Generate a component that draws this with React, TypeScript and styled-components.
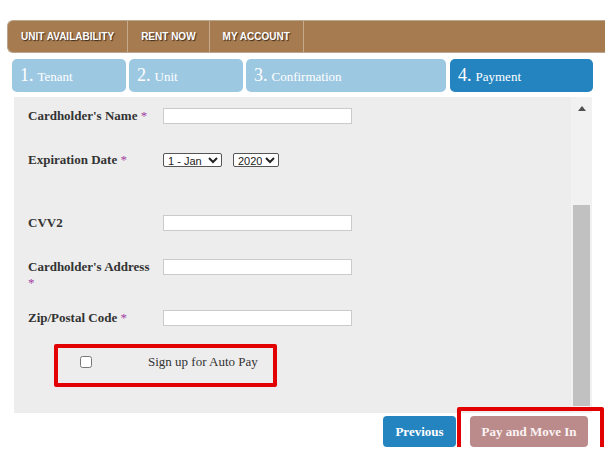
import React from 'react';
import styled, { createGlobalStyle } from 'styled-components';

const GlobalStyle = createGlobalStyle`
  body {
    margin: 0;
    background: #fff;
    font-family: "Liberation Serif", "Times New Roman", serif;
  }
`;

const navItems = ['UNIT AVAILABILITY', 'RENT NOW', 'MY ACCOUNT'];

const steps = [
  { num: '1.', label: 'Tenant', width: 114 },
  { num: '2.', label: 'Unit', width: 114 },
  { num: '3.', label: 'Confirmation', width: 200 },
  { num: '4.', label: 'Payment', width: 143, active: true },
];

const App = () => {
  return (
    <>
      <GlobalStyle />
      <Page>
        <Nav>
          {navItems.map((item) => (
            <NavItem key={item}>{item}</NavItem>
          ))}
        </Nav>

        <Steps>
          {steps.map((s) => (
            <Step key={s.num} $width={s.width} $active={!!s.active}>
              <StepNum>{s.num}</StepNum>
              <StepLabel>{s.label}</StepLabel>
            </Step>
          ))}
        </Steps>

        <Panel>
          <FormArea>
            <Row>
              <Label>Cardholder's Name <Req>*</Req></Label>
              <TextInput type="text" />
            </Row>
            <Row $gap={28}>
              <Label>Expiration Date <Req>*</Req></Label>
              <Selects>
                <Select $width={59} defaultValue="1">
                  <option value="1">1 - Jan</option>
                  <option value="2">2 - Feb</option>
                </Select>
                <Select $width={46} defaultValue="2020">
                  <option value="2020">2020</option>
                  <option value="2021">2021</option>
                </Select>
              </Selects>
            </Row>
            <Row $gap={47}>
              <Label>CVV2</Label>
              <TextInput type="text" />
            </Row>
            <Row $gap={28}>
              <Label>Cardholder's Address <Req>*</Req></Label>
              <TextInput type="text" />
            </Row>
            <Row $gap={19}>
              <Label>Zip/Postal Code <Req>*</Req></Label>
              <TextInput type="text" />
            </Row>
            <AutoPayBox>
              <Check type="checkbox" />
              <AutoPayText>Sign up for Auto Pay</AutoPayText>
            </AutoPayBox>
          </FormArea>
          <Scrollbar>
            <ArrowButton>
              <ArrowUp />
            </ArrowButton>
            <Track />
            <Thumb />
          </Scrollbar>
        </Panel>

        <Buttons>
          <PrevButton>Previous</PrevButton>
          <Highlight>
            <PayButton>Pay and Move In</PayButton>
            <RedFrame />
          </Highlight>
        </Buttons>
      </Page>
    </>
  );
};

export default App;

const Page = styled.div`
  width: 598px;
  padding: 20px 0 0 7px;
`;

const Nav = styled.nav`
  display: flex;
  height: 33px;
  box-sizing: border-box;
  background: #a67b50;
  border: 1px solid #b9a791;
  border-right: none;
  border-radius: 6px 0 0 6px;
`;

const NavItem = styled.div`
  display: flex;
  align-items: center;
  padding: 0 13px;
  border-right: 1px solid #c6aa8a;
  font-family: "Liberation Sans", Arial, sans-serif;
  font-weight: bold;
  font-size: 10px;
  color: #fff;
  text-shadow: 1px 1px 1px #3a2a1a;
`;

const Steps = styled.div`
  display: flex;
  gap: 3px;
  margin: 6px 0 0 5px;
`;

const Step = styled.div<{ $width: number; $active: boolean }>`
  width: ${(p) => p.$width}px;
  height: 33px;
  box-sizing: border-box;
  display: flex;
  align-items: baseline;
  padding: 6px 0 0 8px;
  margin-right: ${(p) => (p.$width === 200 ? 1 : 0)}px;
  border-radius: 5px;
  background: ${(p) => (p.$active ? '#2384c0' : '#9dc8e2')};
  color: #fff;
`;

const StepNum = styled.span`
  font-size: 18px;
  margin-right: 4px;
`;

const StepLabel = styled.span`
  font-size: 13px;
`;

const Panel = styled.div`
  display: flex;
  width: 578px;
  height: 316px;
  margin: 5px 0 0 7px;
  background: #ededed;
  overflow: hidden;
`;

const FormArea = styled.div`
  flex: 1;
  padding: 11px 0 0 14px;
`;

const Row = styled.div<{ $gap?: number }>`
  display: grid;
  grid-template-columns: 128px 189px;
  column-gap: 7px;
  align-items: start;
  margin-top: ${(p) => p.$gap || 0}px;
`;

const Label = styled.label`
  font-weight: bold;
  font-size: 13px;
  line-height: 16px;
  color: #333;
`;

const Req = styled.span`
  color: #a23da2;
  font-weight: normal;
`;

const TextInput = styled.input`
  width: 189px;
  height: 16px;
  box-sizing: border-box;
  margin: 0;
  padding: 0 3px;
  border: 1px solid #cbcbcb;
  background: #fff;
`;

const Selects = styled.div`
  display: flex;
  gap: 11px;
  padding-top: 1px;
`;

const Select = styled.select<{ $width: number }>`
  width: ${(p) => p.$width}px;
  height: 14px;
  box-sizing: border-box;
  margin: 0;
  padding: 0;
  font-family: "Liberation Sans", Arial, sans-serif;
  font-size: 11px;
  border: 1px solid #555;
  border-radius: 2px;
  background: #fff;
  color: #222;
`;

const AutoPayBox = styled.div`
  display: flex;
  align-items: flex-start;
  width: 223px;
  height: 43px;
  box-sizing: border-box;
  margin: 18px 0 0 26px;
  padding: 7px 0 0 22px;
  border: 4px solid #e30000;
  border-radius: 2px;
`;

const Check = styled.input`
  width: 12px;
  height: 12px;
  margin: 1px 0 0 0;
`;

const AutoPayText = styled.span`
  margin-left: 56px;
  font-size: 13px;
  line-height: 14px;
  color: #333;
`;

const Scrollbar = styled.div`
  display: flex;
  flex-direction: column;
  align-items: center;
  width: 21px;
  background: #f1f1f1;
`;

const ArrowButton = styled.div`
  display: flex;
  justify-content: center;
  height: 17px;
  width: 100%;
  padding-top: 9px;
  box-sizing: border-box;
`;

const ArrowUp = styled.div`
  width: 0;
  height: 0;
  border-left: 4.5px solid transparent;
  border-right: 4.5px solid transparent;
  border-bottom: 5px solid #505050;
`;

const Track = styled.div`
  flex: 1;
`;

const Thumb = styled.div`
  width: 17px;
  height: 201px;
  margin-bottom: 7px;
  background: #c1c1c1;
`;

const Buttons = styled.div`
  display: flex;
  justify-content: flex-end;
  gap: 14px;
  margin-top: 3px;
  padding-right: 17px;
`;

const BaseButton = styled.button`
  height: 31px;
  border: none;
  border-radius: 4px;
  font-family: "Liberation Serif", "Times New Roman", serif;
  font-weight: bold;
  font-size: 13px;
  color: #fff;
  cursor: pointer;
`;

const PrevButton = styled(BaseButton)`
  width: 73px;
  background: #2384c0;
`;

const PayButton = styled(BaseButton)`
  width: 118px;
  background: #bb8b8b;
  color: #fbf3f3;
`;

const Highlight = styled.div`
  position: relative;
  display: flex;
`;

const RedFrame = styled.div`
  position: absolute;
  top: -9px;
  left: -13px;
  right: -16px;
  bottom: -8px;
  border: 4px solid #e30000;
  border-radius: 2px;
  pointer-events: none;
`;
